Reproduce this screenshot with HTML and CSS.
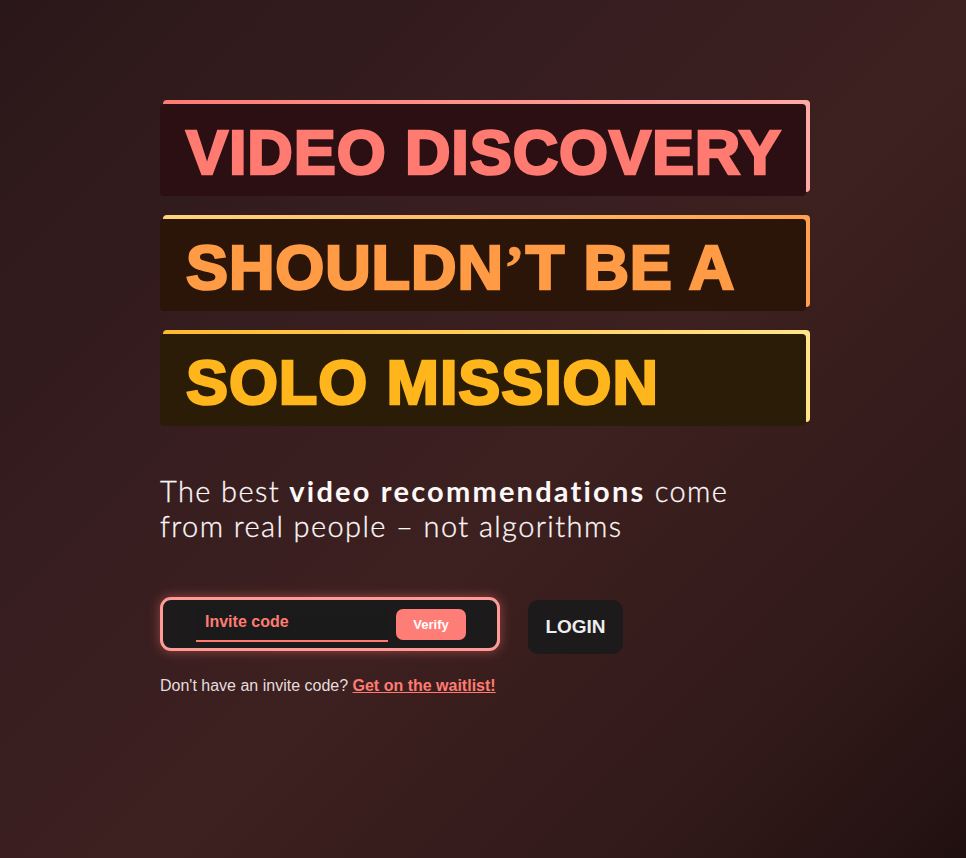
FILE: index.html
```html
<!DOCTYPE html>
<html lang="en">
<head>
<meta charset="utf-8">
<title>Video discovery</title>
<link rel="stylesheet" href="styles.css">
</head>
<body>
<main class="hero">
  <h1 class="headline">
    <span class="strip strip-1">VIDEO DISCOVERY</span>
    <span class="strip strip-2">SHOULDN<span class="apos">’</span>T BE A</span>
    <span class="strip strip-3">SOLO MISSION</span>
  </h1>
  <p class="lead">The best <strong>video recommendations</strong> come<br>from real people – not algorithms</p>
  <div class="actions">
    <form class="invite">
      <input class="invite-input" type="text" placeholder="Invite code">
      <button class="verify" type="button">Verify</button>
    </form>
    <button class="login" type="button">LOGIN</button>
  </div>
  <p class="waitlist">Don't have an invite code? <a href="#">Get on the waitlist!</a></p>
</main>
</body>
</html>
```
FILE: styles.css
```css
html, body {
  margin: 0;
  height: 100%;
}
body {
  background: linear-gradient(135deg, #2a1719 0%, #361d1f 30%, #3d2020 55%, #331a1a 80%, #211010 100%);
  font-family: "Liberation Sans", Arial, sans-serif;
  color: #f3ecec;
}
.hero {
  width: 646px;
  margin: 0 auto 0 160px;
  padding-top: 104px;
}
.headline {
  margin: 0;
  display: flex;
  flex-direction: column;
  gap: 23px;
}
.strip {
  position: relative;
  display: block;
  box-sizing: border-box;
  height: 92px;
  line-height: 92px;
  padding: 2px 0 0 26px;
  border-radius: 4px;
  font-family: "Liberation Sans", Arial, sans-serif;
  font-weight: 700;
  font-size: 63px;
  letter-spacing: 0.9px;
  -webkit-text-stroke: 2.6px currentColor;
  white-space: nowrap;
}
.strip .apos {
  font-family: "Liberation Serif", "DejaVu Serif", serif;
  font-weight: 700;
  -webkit-text-stroke: 0.5px currentColor;
}
.strip::before {
  content: "";
  position: absolute;
  top: -4px;
  right: -4px;
  bottom: 4px;
  left: 3px;
  border-radius: 4px;
  z-index: -1;
}
.strip-1 { background: #2b0f12; color: #ff7b72; }
.strip-1::before { background: linear-gradient(90deg, #ff7b72, #ffaaa6); }
.strip-2 { background: #2a1508; color: #ff9b45; }
.strip-2::before { background: linear-gradient(90deg, #ffd37c, #ffa04c); }
.strip-3 { background: #2a1c06; color: #ffb61c; }
.strip-3::before { background: linear-gradient(90deg, #ffb92e, #ffe48a); }
.lead {
  margin: 47px 0 0;
  font-family: "Lato", "Open Sans", sans-serif;
  font-weight: 300;
  font-size: 29px;
  line-height: 35px;
  letter-spacing: 1.4px;
  color: #fdf8f8;
  -webkit-text-stroke: 0.3px currentColor;
}
.lead strong {
  font-weight: 700;
  letter-spacing: 2.2px;
  -webkit-text-stroke: 0;
}
.actions {
  margin-top: 54px;
  display: flex;
  align-items: flex-start;
  gap: 28px;
}
.invite {
  margin: 0;
  box-sizing: border-box;
  width: 340px;
  height: 54px;
  display: flex;
  align-items: center;
  gap: 8px;
  padding: 0 0 0 33px;
  background: #1c1a1b;
  border: 3px solid #ff9b97;
  border-radius: 11px;
  box-shadow: 0 0 12px rgba(255, 120, 112, 0.45);
}
.invite-input {
  box-sizing: border-box;
  flex: 0 0 192px;
  width: 192px;
  height: 33px;
  margin-top: 3px;
  padding: 0 9px 5px;
  background: #1a1a1a;
  border: 0;
  border-bottom: 2px solid #ff7b72;
  color: #ff7b72;
  font-family: "Liberation Sans", Arial, sans-serif;
  font-weight: 700;
  font-size: 16px;
  outline: none;
}
.invite-input::placeholder {
  color: #ff7b72;
  opacity: 1;
}
.verify {
  flex: 0 0 70px;
  width: 70px;
  height: 31px;
  padding: 0;
  border: 0;
  border-radius: 7px;
  background: #ff7d77;
  color: #fff;
  font-family: "Liberation Sans", Arial, sans-serif;
  font-weight: 700;
  font-size: 13px;
}
.login {
  margin-top: 3px;
  width: 95px;
  height: 54px;
  border: 0;
  border-radius: 10px;
  background: #1c1a1b;
  color: #eeeeee;
  font-family: "Liberation Sans", Arial, sans-serif;
  font-weight: 700;
  font-size: 19px;
}
.waitlist {
  margin: 23px 0 0;
  font-size: 16px;
  color: #e6dcdc;
}
.waitlist a {
  color: #ff7b72;
  font-weight: 700;
}
```
